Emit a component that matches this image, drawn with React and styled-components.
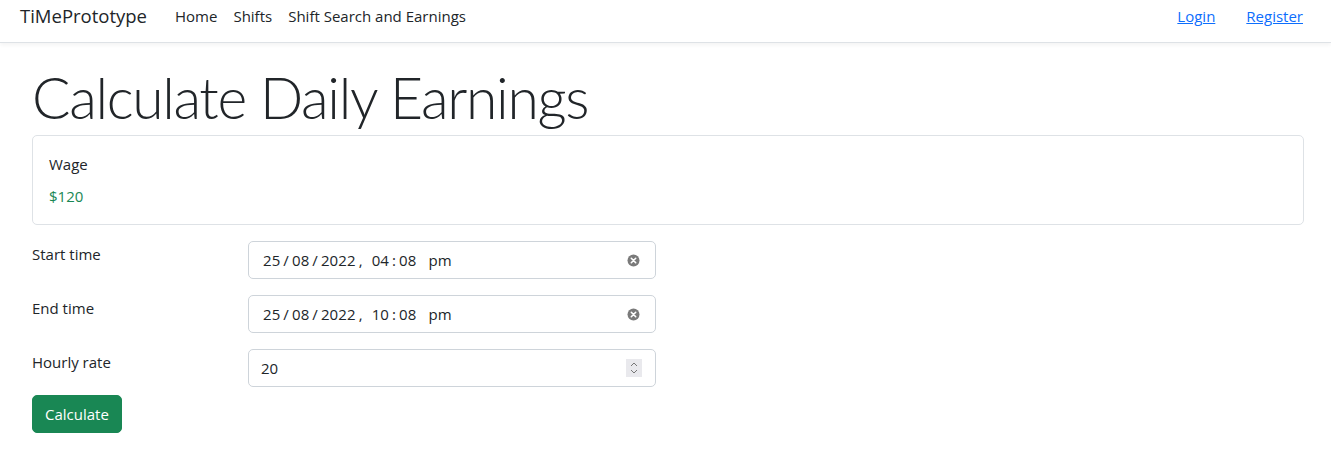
import React from "react";
import styled, { createGlobalStyle } from "styled-components";

const GlobalStyle = createGlobalStyle`
  body {
    margin: 0;
    font-family: "Open Sans", "Noto Sans", sans-serif;
    font-size: 15px;
    line-height: 24px;
    color: #212529;
    background: #fff;
  }
  * { box-sizing: border-box; }
`;

const Navbar = styled.nav`
  height: 43px;
  display: flex;
  align-items: flex-start;
  padding: 2px 28px 0 20px;
  border-bottom: 1px solid #dee2e6;
  box-shadow: 0 2px 4px rgba(0, 0, 0, 0.05);
`;

const Brand = styled.a`
  font-size: 18.5px;
  line-height: 28px;
  color: #212529;
  text-decoration: none;
  margin-right: 28px;
`;

const NavList = styled.div`
  display: flex;
  gap: 16px;
  flex: 1;
  padding-top: 2px;
`;

const NavItem = styled.a`
  color: #212529;
  text-decoration: none;
  font-size: 15px;
`;

const AuthLinks = styled.div`
  display: flex;
  gap: 31px;
  padding-top: 2px;
`;

const AuthLink = styled.a`
  color: #0d6efd;
  text-decoration: underline;
  font-size: 15px;
`;

const Main = styled.main`
  padding: 0 27px 0 32px;
`;

const Title = styled.h1`
  font-family: Lato, "Open Sans", sans-serif;
  font-size: 57px;
  font-weight: 300;
  line-height: 76px;
  letter-spacing: -1.35px;
  margin: 0;
  padding-top: 16px;
`;

const Card = styled.div`
  border: 1px solid #dee2e6;
  border-radius: 5px;
  padding: 16px;
  margin-bottom: 16px;
`;

const CardLine = styled.div`
  color: ${(p) => (p.$green ? "#198754" : "#212529")};
  margin-bottom: ${(p) => (p.$last ? "0" : "8px")};
`;

const Row = styled.div`
  display: grid;
  grid-template-columns: 216px 408px;
  margin-bottom: 16px;
`;

const Label = styled.label`
  padding-top: 1px;
`;

const Field = styled.div`
  height: 38px;
  border: 1px solid #ced4da;
  border-radius: 5px;
  display: flex;
  align-items: center;
  padding: 0 12px 0 14px;
  font-size: 15px;
`;

const DateText = styled.span`
  flex: 1;
  letter-spacing: 0.1px;
  word-spacing: 2px;
`;

const NumText = styled.span`
  flex: 1;
  margin-left: -2px;
`;

const Sep = styled.span`
  margin: 0 3px;
`;

const Spinner = styled.span`
  width: 16px;
  height: 18px;
  background: #e9e9ed;
  display: flex;
  align-items: center;
  justify-content: center;
  margin-right: 1px;
`;

const Button = styled.button`
  display: block;
  background: #198754;
  color: #fff;
  border: 1px solid #198754;
  border-radius: 5px;
  height: 38px;
  padding: 0 12px;
  font-family: inherit;
  font-size: 15px;
  margin-top: -8px;
`;

const ClearIcon = () => (
  <svg width="13" height="13" viewBox="0 0 13 13" style={{ marginRight: 3 }}>
    <circle cx="6.5" cy="6.5" r="6" fill="#7a7a7a" />
    <path d="M4.3 4.3 L8.7 8.7 M8.7 4.3 L4.3 8.7" stroke="#fff" strokeWidth="1.6" strokeLinecap="round" />
  </svg>
);

const SpinIcon = () => (
  <svg width="10" height="14" viewBox="0 0 10 14">
    <path d="M2 5 L5 2 L8 5 M2 9 L5 12 L8 9" stroke="#777" strokeWidth="1" fill="none" />
  </svg>
);

const DateValue = ({ d, m, y, h, min }) => (
  <DateText>
    {d}<Sep>/</Sep>{m}<Sep>/</Sep>{y}<Sep>,</Sep> {h}<Sep>:</Sep>{min}&nbsp; pm
  </DateText>
);

export default function App() {
  return (
    <>
      <GlobalStyle />
      <Navbar>
        <Brand href="#">TiMePrototype</Brand>
        <NavList>
          <NavItem href="#">Home</NavItem>
          <NavItem href="#">Shifts</NavItem>
          <NavItem href="#">Shift Search and Earnings</NavItem>
        </NavList>
        <AuthLinks>
          <AuthLink href="#">Login</AuthLink>
          <AuthLink href="#">Register</AuthLink>
        </AuthLinks>
      </Navbar>
      <Main>
        <Title>Calculate Daily Earnings</Title>
        <Card>
          <CardLine>Wage</CardLine>
          <CardLine $green $last>$120</CardLine>
        </Card>
        <Row>
          <Label>Start time</Label>
          <Field>
            <DateValue d="25" m="08" y="2022" h="04" min="08" />
            <ClearIcon />
          </Field>
        </Row>
        <Row>
          <Label>End time</Label>
          <Field>
            <DateValue d="25" m="08" y="2022" h="10" min="08" />
            <ClearIcon />
          </Field>
        </Row>
        <Row>
          <Label>Hourly rate</Label>
          <Field>
            <NumText>20</NumText>
            <Spinner><SpinIcon /></Spinner>
          </Field>
        </Row>
        <Button>Calculate</Button>
      </Main>
    </>
  );
}
